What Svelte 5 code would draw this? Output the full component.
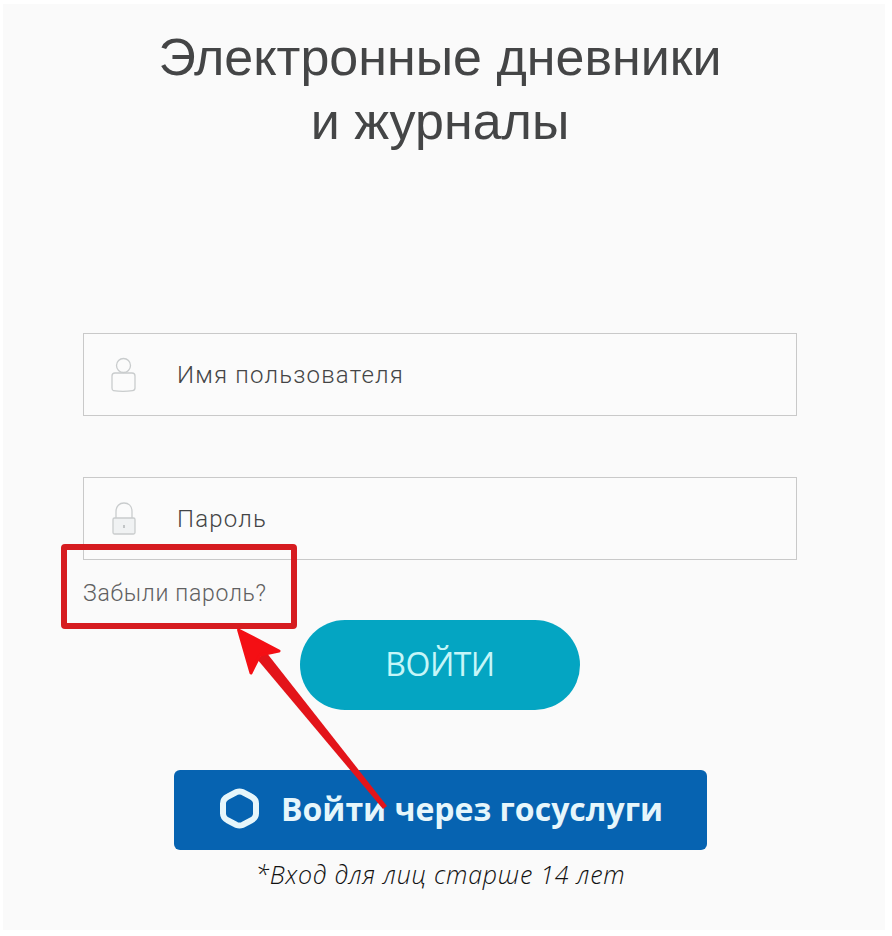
<script>
  let username = $state("");
  let password = $state("");
</script>

<main class="panel">
  <h1 class="title">Электронные дневники<br />и журналы</h1>

  <form class="login">
    <label class="field">
      <svg class="field__icon" width="28" height="38" viewBox="0 0 28 38" fill="none" stroke="#c9cccd" stroke-width="1.3">
        <circle cx="13.500" cy="9.500" r="7" />
        <path d="M5 17h17a3 3 0 0 1 3 3V32c0 1.500-1 2.400-2.400 2.600-6 1-13.200 1-19.200 0C2 34.400 2 33.500 2 32V20a3 3 0 0 1 3-3z" />
      </svg>
      <input class="field__input" type="text" placeholder="Имя пользователя" bind:value={username} />
    </label>

    <label class="field field--password">
      <svg class="field__icon" width="28" height="38" viewBox="0 0 28 38" fill="none" stroke="#c9cccd" stroke-width="1.3">
        <path d="M6 18V11.500C6 6 9.500 3 14 3s8 3 8 8.500V18" />
        <rect x="3" y="18" width="22" height="16" rx="1.500" fill="#f0f2f3" />
        <path d="M14 25v3" stroke="#a9adaf" />
      </svg>
      <input class="field__input" type="password" placeholder="Пароль" bind:value={password} />
    </label>

    <a class="forgot" href="#forgot">Забыли пароль?</a>

    <button class="submit" type="submit">ВОЙТИ</button>

    <button class="gosuslugi" type="button">
      <svg width="39" height="41" viewBox="0 0 39 41" fill="none" stroke="#e6f6fb" stroke-width="6">
        <path d="M16.500 4Q19.500 2.800 22.500 4L31 8.500Q36 11 36 15.500V25.500Q36 30 31 32.500L22.500 37Q19.500 38.200 16.500 37L8 32.500Q3 30 3 25.500V15.500Q3 11 8 8.500z" />
      </svg>
      <span>Войти через госуслуги</span>
    </button>

    <p class="note">*Вход для лиц старше 14 лет</p>
  </form>

  <!-- annotation drawn over the form -->
  <div class="callout"></div>
  <svg class="arrow" width="170" height="190" viewBox="0 0 170 190">
    <path d="M46 28L37 35 163 185 167 182z" fill="#e3141a" />
    <path d="M18.600 6L59 27 40 31 31 49z" fill="#f40f14" stroke="#f40f14" stroke-width="3" stroke-linejoin="round" />
  </svg>
</main>

<style>
  :global(body) {
    margin: 0;
    background: #ffffff;
  }

  .panel {
    position: relative;
    box-sizing: border-box;
    width: 882px;
    height: 926px;
    margin: 4px 0 0 3px;
    padding-top: 21px;
    background: #fafafa;
    font-family: "Liberation Sans", Arial, sans-serif;
  }

  .title {
    margin: 0;
    padding-right: 8px;
    font-size: 52px;
    font-weight: 400;
    line-height: 64px;
    text-align: center;
    color: #444546;
  }

  .login {
    display: flex;
    flex-direction: column;
    margin: 180px 0 0 80px;
    width: 714px;
  }

  .field {
    display: flex;
    align-items: center;
    box-sizing: border-box;
    height: 83px;
    padding-left: 26px;
    border: 1px solid #c9c9c9;
    background: #fbfbfb;
  }

  .field--password {
    margin-top: 61px;
  }

  .field__input {
    flex: 1;
    min-width: 0;
    margin-left: 39px;
    padding: 0;
    border: 0;
    outline: 0;
    background: transparent;
    font-family: Roboto, sans-serif;
    font-size: 24px;
    font-weight: 300;
    letter-spacing: 1.2px;
    color: #555;
  }

  .field__input::placeholder {
    color: #444546;
    opacity: 1;
  }

  .forgot {
    margin-top: 21px;
    font-family: Roboto, sans-serif;
    font-size: 23px;
    font-weight: 300;
    letter-spacing: 0.7px;
    line-height: 26px;
    color: #5f6061;
    text-decoration: none;
  }

  .submit {
    align-self: flex-start;
    width: 280px;
    height: 90px;
    margin: 13px 0 0 217px;
    padding: 0 0 4px;
    border: 0;
    border-radius: 45px;
    background: #04a5c2;
    font-family: "Open Sans", sans-serif;
    font-size: 32px;
    letter-spacing: -0.5px;
    color: #c6f6f8;
  }

  .gosuslugi {
    display: flex;
    align-items: center;
    justify-content: center;
    gap: 22px;
    align-self: flex-start;
    width: 533px;
    height: 80px;
    margin: 60px 0 0 91px;
    padding: 0 0 4px 2px;
    border: 0;
    border-radius: 6px;
    background: #0663b1;
    font-family: "Open Sans", sans-serif;
    font-size: 32px;
    font-weight: 700;
    color: #e6f6fb;
  }

  .note {
    margin: 9px 0 0 91px;
    width: 533px;
    font-family: "Open Sans", sans-serif;
    font-size: 25px;
    font-weight: 300;
    font-style: italic;
    letter-spacing: 0.75px;
    line-height: 30px;
    text-align: center;
    color: #111;
  }

  .callout {
    position: absolute;
    left: 58px;
    top: 540px;
    width: 236px;
    height: 85px;
    box-sizing: border-box;
    border: 6px solid #d61c20;
    border-radius: 4px;
  }

  .arrow {
    position: absolute;
    left: 217px;
    top: 620px;
  }
</style>
